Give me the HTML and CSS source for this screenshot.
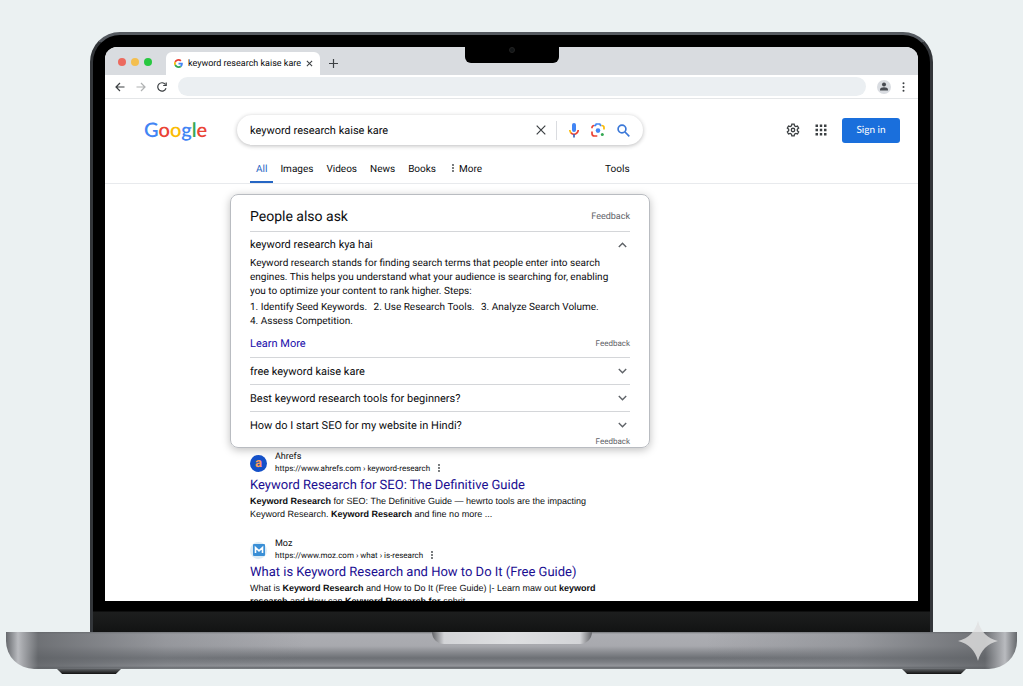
FILE: index.html
```html
<!DOCTYPE html>
<html lang="en">
<head>
	<meta charset="UTF-8">
	<title>keyword research kaise kare</title>
	<link rel="stylesheet" href="styles.css">
</head>
<body>
	<div class="laptop">
		<div class="lid">
			<div class="notch"><i class="camera"></i></div>
			<div class="screen">
				<!-- browser tabs -->
				<div class="tabstrip">
					<div class="lights"><i class="red"></i><i class="yellow"></i><i class="green"></i></div>
					<div class="tab">
						<svg class="favicon" viewBox="0 0 48 48">
							<path fill="#ea4335" d="M24 9.500c3.500 0 6.700 1.200 9.200 3.600l6.900-6.900C35.900 2.400 30.500 0 24 0 14.600 0 6.500 5.400 2.600 13.200l8 6.200C12.400 13.700 17.700 9.500 24 9.500z"/>
							<path fill="#4285f4" d="M47 24.500c0-1.600-.2-3.100-.4-4.500H24v9h12.900c-.6 3-2.200 5.500-4.700 7.200l7.700 6C44.400 38 47 31.800 47 24.500z"/>
							<path fill="#fbbc05" d="M10.500 28.600c-.5-1.500-.8-3-.8-4.600s.3-3.100.8-4.600l-8-6.200C.9 16.500 0 20.100 0 24s.9 7.500 2.600 10.800z"/>
							<path fill="#34a853" d="M24 48c6.500 0 11.900-2.100 15.900-5.800l-7.700-6c-2.200 1.500-4.900 2.300-8.200 2.300-6.300 0-11.600-4.200-13.500-9.900l-8 6.200C6.500 42.600 14.600 48 24 48z"/>
						</svg>
						<span>keyword research kaise kare</span>
						<button class="icon-btn" aria-label="Close tab"><svg width="7" height="7" viewBox="0 0 8 8"><path d="M1 1l6 6M7 1l-6 6"/></svg></button>
					</div>
					<button class="icon-btn new-tab" aria-label="New tab"><svg width="9" height="9" viewBox="0 0 9 9"><path d="M4.500 0v9M0 4.500h9"/></svg></button>
				</div>
				<div class="toolbar">
					<button class="icon-btn" aria-label="Back"><svg width="10" height="10" viewBox="0 0 10 10"><path d="M9.500 5H1M5 1L1 5l4 4"/></svg></button>
					<button class="icon-btn off" aria-label="Forward"><svg width="10" height="10" viewBox="0 0 10 10"><path d="M.5 5H9M5 1l4 4-4 4"/></svg></button>
					<button class="icon-btn" aria-label="Reload"><svg width="10" height="10" viewBox="0 0 10 10"><path d="M9 6.200A4.200 4.200 0 1 1 8.400 2.500M9.200.5v3H6.200"/></svg></button>
					<input class="address" type="text" aria-label="Address">
					<button class="icon-btn avatar" aria-label="Profile"><svg width="14" height="14" viewBox="0 0 14 14"><circle cx="7" cy="7" r="7" fill="#d9dce1"/><circle cx="7" cy="4.600" r="2" fill="#474a50"/><path d="M3 10.500V9.700C3 8 5 7.300 7 7.300s4 .7 4 2.400v.8z" fill="#474a50"/></svg></button>
					<button class="icon-btn dots" aria-label="Menu"><svg width="3" height="10" viewBox="0 0 3 10"><circle cx="1.500" cy="1.200" r="1"/><circle cx="1.500" cy="5" r="1"/><circle cx="1.500" cy="8.800" r="1"/></svg></button>
				</div>

				<!-- search header -->
				<div class="header">
					<a class="logo" href="#" aria-label="Google"><span class="b">G</span><span class="r">o</span><span class="y">o</span><span class="b">g</span><span class="g">l</span><span class="r">e</span></a>
					<form class="search">
						<input type="text" aria-label="Search" value="keyword research kaise kare">
						<button type="button" class="icon-btn clear" aria-label="Clear"><svg width="10" height="10" viewBox="0 0 10 10"><path d="M.7.7l8.600 8.600M9.300.7L.7 9.300"/></svg></button>
						<button type="button" class="icon-btn" aria-label="Voice search">
							<svg width="10" height="15" viewBox="0 0 10 15" class="thick">
								<rect x="3" y="0" width="4" height="9" rx="2" fill="#4285f4" stroke="none"/>
								<path d="M.8 7C.9 8.300 1.400 9.300 2.200 10" stroke="#fbbc05"/>
								<path d="M2 9.900c1.700 1.700 4.300 1.700 6 0 .8-.8 1.200-1.800 1.200-2.900" stroke="#ea4335"/>
								<path d="M5 11v3.500" stroke="#3f62b8"/>
							</svg>
						</button>
						<button type="button" class="icon-btn" aria-label="Search by image">
							<svg width="14" height="14" viewBox="0 0 14 14" class="thick">
								<path d="M1 5.200V4.500C1 3.200 2 2.500 3 2.500" stroke="#ea4335"/>
								<path d="M3 2.500h1.500L5.200 1h3.600l.7 1.500h1" stroke="#4285f4"/>
								<path d="M10.500 2.500c1.500 0 2.500.7 2.500 2v2" stroke="#fbbc05"/>
								<path d="M1 8.500v2C1 12 2 13 3.500 13h2.800" stroke="#ea4335"/>
								<circle cx="7" cy="7.600" r="2.300" fill="#4285f4" stroke="none"/>
								<circle cx="11.300" cy="11.500" r="1.500" fill="#34a853" stroke="none"/>
							</svg>
						</button>
						<button class="icon-btn" aria-label="Google Search"><svg width="13" height="13" viewBox="0 0 13 13" class="thick"><circle cx="5" cy="5" r="3.900" stroke="#3b78d8"/><path d="M8 8l4.300 4.300" stroke="#3b78d8"/></svg></button>
					</form>
					<div class="account">
						<button class="icon-btn" aria-label="Settings"><svg width="14" height="14" viewBox="0 0 24 24" class="gear"><path d="M10 2h4l.6 3 2.200 1.200 2.900-1 2 3.500-2.300 2v2.600l2.300 2-2 3.500-2.900-1-2.200 1.200-.6 3h-4l-.6-3-2.200-1.200-2.900 1-2-3.500 2.300-2v-2.600l-2.300-2 2-3.500 2.900 1L9.400 5z"/><circle cx="12" cy="12" r="3"/></svg></button>
						<button class="icon-btn dots" aria-label="Google apps"><svg width="12" height="12" viewBox="0 0 12 12"><path d="M.5.5h2.500V3H.5zM4.800.5h2.400V3H4.800zM9 .5h2.500V3H9zM.5 4.800h2.500v2.400H.5zM4.800 4.800h2.400v2.400H4.800zM9 4.800h2.500v2.400H9zM.5 9h2.500v2.500H.5zM4.800 9h2.400v2.500H4.800zM9 9h2.500v2.500H9z"/></svg></button>
						<button class="signin">Sign in</button>
					</div>
				</div>
				<div class="nav">
					<a class="active" href="#">All</a>
					<a href="#">Images</a>
					<a href="#">Videos</a>
					<a href="#">News</a>
					<a href="#">Books</a>
					<a class="more" href="#"><svg class="kebab" width="2" height="8" viewBox="0 0 2 8"><circle cx="1" cy="1" r=".9"/><circle cx="1" cy="4" r=".9"/><circle cx="1" cy="7" r=".9"/></svg>More</a>
					<a class="tools" href="#">Tools</a>
				</div>

				<!-- people also ask -->
				<div class="ask">
					<div class="ask-head">
						<h2>People also ask</h2>
						<a href="#">Feedback</a>
					</div>
					<div class="question open">
						<button>keyword research kya hai<svg width="9" height="6" viewBox="0 0 9 6"><path d="M.8 5l3.700-3.700L8.200 5"/></svg></button>
						<p>Keyword research stands for finding search terms that people enter into search engines. This helps you understand what your audience is searching for, enabling you to optimize your content to rank higher. Steps:</p>
						<p class="steps"><span>1. Identify Seed Keywords.</span> <span>2. Use Research Tools.</span> <span>3. Analyze Search Volume.</span> <span>4. Assess Competition.</span></p>
						<div class="ask-foot">
							<a class="learn" href="#">Learn More</a>
							<a class="feedback" href="#">Feedback</a>
						</div>
					</div>
					<div class="question"><button>free keyword kaise kare<svg width="9" height="6" viewBox="0 0 9 6"><path d="M.8 1l3.700 3.700L8.200 1"/></svg></button></div>
					<div class="question"><button>Best keyword research tools for beginners?<svg width="9" height="6" viewBox="0 0 9 6"><path d="M.8 1l3.700 3.700L8.200 1"/></svg></button></div>
					<div class="question"><button>How do I start SEO for my website in Hindi?<svg width="9" height="6" viewBox="0 0 9 6"><path d="M.8 1l3.700 3.700L8.200 1"/></svg></button></div>
					<a class="feedback last" href="#">Feedback</a>
				</div>

				<!-- results -->
				<div class="results">
					<div class="result">
						<div class="site">
							<span class="badge ahrefs">a</span>
							<div>
								<p>Ahrefs</p>
								<p class="url">https://www.ahrefs.com › keyword-research <svg class="kebab" width="2" height="8" viewBox="0 0 2 8"><circle cx="1" cy="1" r=".9"/><circle cx="1" cy="4" r=".9"/><circle cx="1" cy="7" r=".9"/></svg></p>
							</div>
						</div>
						<h3><a href="#">Keyword Research for SEO: The Definitive Guide</a></h3>
						<p class="snippet"><b>Keyword Research</b> for SEO: The Definitive Guide — hewrto tools are the impacting Keyword Research. <b>Keyword Research</b> and fine no more ...</p>
					</div>
					<div class="result">
						<div class="site">
							<span class="badge moz"><svg width="12" height="12" viewBox="0 0 12 12"><rect width="12" height="12" rx="1" fill="#3a8fd6"/><path d="M2.500 9V3.500L6 6.800l3.500-3.300V9" fill="none" stroke="#fff" stroke-width="1.600"/></svg></span>
							<div>
								<p>Moz</p>
								<p class="url">https://www.moz.com › what › is-research <svg class="kebab" width="2" height="8" viewBox="0 0 2 8"><circle cx="1" cy="1" r=".9"/><circle cx="1" cy="4" r=".9"/><circle cx="1" cy="7" r=".9"/></svg></p>
							</div>
						</div>
						<h3><a href="#">What is Keyword Research and How to Do It (Free Guide)</a></h3>
						<p class="snippet">What is <b>Keyword Research</b> and How to Do It (Free Guide) |- Learn maw out <b>keyword research</b> and How can <b>Keyword Research for</b> sphrit.</p>
					</div>
				</div>
			</div>
			<div class="chin"></div>
		</div>
		<div class="base">
			<div class="thumb"></div>
			<svg class="spark" width="40" height="40" viewBox="0 0 40 40"><path d="M20 0c3 11 9 17 20 20-11 3-17 9-20 20-3-11-9-17-20-20C11 17 17 11 20 0z"/></svg>
		</div>
		<div class="feet"><i></i><i></i></div>
	</div>
</body>
</html>
```
FILE: styles.css
```css
*{
	margin: 0;
	padding: 0;
	box-sizing: border-box;
}
body{
	background: #ebf1f2;
	font-family: Roboto, Arial, sans-serif;
	color: #0c0d0f;
	text-rendering: geometricPrecision;
}
a{
	color: inherit;
	text-decoration: none;
}
button{
	border: 0;
	background: none;
	font-family: inherit;
	color: inherit;
	text-rendering: inherit;
}
input{
	border: 0;
	outline: 0;
	font-family: inherit;
	text-rendering: inherit;
}

/* laptop */
.laptop{
	display: flex;
	flex-direction: column;
	height: 100vh;
	padding: 32px 6px 12px;
}
.lid{
	position: relative;
	flex: 1;
	min-height: 0;
	display: flex;
	flex-direction: column;
	margin: 0 84px;
	padding: 12px 12px 0;
	border: 3px solid #33363a;
	border-top-color: #555a60;
	border-bottom: 0;
	border-radius: 30px 30px 0 0;
	background: #000;
}
.screen{
	flex: 1;
	min-height: 0;
	overflow: hidden;
	border-radius: 12px 12px 0 0;
	background: #fff;
}
.notch{
	position: absolute;
	top: 10px;
	left: 50%;
	width: 94px;
	height: 18px;
	margin-left: -47px;
	border-radius: 0 0 6px 6px;
	background: #000;
}
.camera{
	display: block;
	width: 6px;
	height: 6px;
	margin: 2px auto;
	border-radius: 50%;
	background: #111416;
	border: 1px solid #222;
}
.chin{
	flex: none;
	height: 31px;
	margin: 0 -12px;
	background: linear-gradient(#000 10px, #1d1e1e 11px, #121313);
}
.base{
	position: relative;
	height: 37px;
	border-radius: 0 0 28px 28px;
	background:
		linear-gradient(90deg, #66696d 0, #b9bbbf 12px, #a4a6aa 17px, rgba(96,99,103,.8) 32px, rgba(120,123,128,.4) 160px, transparent 300px, transparent 700px, rgba(120,123,128,.4) 850px, rgba(96,99,103,.8) calc(100% - 32px), #a4a6aa calc(100% - 17px), #b9bbbf calc(100% - 12px), #66696d 100%),
		linear-gradient(#75777b 0, #acadb2 2px, #a8a9ae 14px, #8a8c91 20px, #6d7075 26px, #7c7f84 30px, #94969b 34px, #606468 36px, #8d9094 37px);
}
.thumb{
	width: 160px;
	height: 12px;
	margin: 0 auto;
	border-radius: 0 0 12px 12px;
	background: linear-gradient(90deg, #626367, #d3d4d7 12px, #dedfe1 50%, #d3d4d7 calc(100% - 12px), #626367);
}
.spark{
	position: absolute;
	right: 19px;
	top: -11px;
	fill: rgba(225,225,225,.8);
}
.feet{
	display: flex;
	justify-content: space-between;
	padding: 0 51px;
}
.feet i{
	width: 64px;
	height: 5px;
	background: linear-gradient(#5c5f62, #111);
	clip-path: polygon(0 0, 100% 0, 92% 100%, 8% 100%);
}

/* browser */
.icon-btn{
	display: flex;
	align-items: center;
	flex: none;
}
.icon-btn svg{
	fill: none;
	stroke: #3c4043;
	stroke-width: 1.2;
}
.icon-btn .thick{
	stroke-width: 1.7;
}
.icon-btn .gear{
	stroke-width: 2.2;
}
.dots svg{
	fill: #3c4043;
	stroke: none;
}
.avatar svg{
	stroke: none;
}
.off{
	opacity: .4;
}
.tabstrip{
	display: flex;
	align-items: flex-end;
	height: 28px;
	padding-left: 13px;
	background: #d9dce0;
}
.lights{
	display: flex;
	gap: 5px;
	width: 48px;
	padding-bottom: 9px;
}
.lights i{
	width: 8px;
	height: 8px;
	border-radius: 50%;
}
.red{
	background: #ec6a5e;
}
.yellow{
	background: #f4bf4f;
}
.green{
	background: #28c840;
}
.tab{
	display: flex;
	align-items: center;
	gap: 5px;
	height: 23px;
	padding: 0 7px 0 8px;
	border-radius: 6px 6px 0 0;
	background: #fff;
	font-size: 9px;
}
.favicon{
	width: 9px;
	height: 9px;
}
.new-tab{
	height: 23px;
	margin-left: 9px;
}
.toolbar{
	display: flex;
	align-items: center;
	gap: 11px;
	height: 24px;
	padding: 0 13px 0 10px;
	border-bottom: 1px solid #e4e6e8;
}
.address{
	flex: 1;
	min-width: 0;
	height: 19px;
	border-radius: 10px;
	background: #ebeff2;
}

/* search header */
.header{
	display: flex;
	align-items: center;
	padding: 16px 18px 0 39px;
}
.logo{
	flex: none;
	width: 93px;
	font-family: Lato, sans-serif;
	font-size: 20px;
	line-height: 24px;
	font-weight: 600;
}
.b{
	color: #4285f4;
}
.r{
	color: #ea4335;
}
.y{
	color: #fbbc05;
}
.g{
	color: #34a853;
}
.search{
	display: flex;
	align-items: center;
	gap: 12px;
	width: 406px;
	height: 30px;
	padding: 0 13px;
	border-radius: 16px;
	box-shadow: 0 1px 4px rgba(32,33,36,.3);
}
.search input{
	flex: 1;
	min-width: 0;
	font-size: 11px;
	color: #0c0d0f;
}
.clear{
	height: 19px;
	padding-right: 10px;
	border-right: 1px solid #dadce0;
}
.account{
	display: flex;
	align-items: center;
	gap: 15px;
	margin-left: auto;
}
.signin{
	width: 58px;
	height: 25px;
	margin-left: 0;
	border-radius: 3px;
	background: #1a6fdc;
	color: #fff;
	font-family: Lato, sans-serif;
	font-size: 10px;
}
.nav{
	display: flex;
	gap: 13px;
	height: 39px;
	padding: 19px 0 0 145px;
	border-bottom: 1px solid #e8eaed;
	font-size: 10px;
	line-height: 12px;
}
.active{
	margin-right: -6px;
	padding: 0 6px;
	border-bottom: 2px solid #2566c4;
	color: #2566c4;
}
.kebab{
	fill: #3c4043;
}
.more .kebab{
	margin: 0 5px 0 3px;
}
.tools{
	margin-left: 110px;
}

/* people also ask */
.ask{
	width: 420px;
	height: 254px;
	margin: 10px 0 0 125px;
	padding: 0 19px;
	border: 1px solid #b9bcc1;
	border-radius: 8px;
	box-shadow: 0 2px 8px rgba(0,0,0,.25);
	font-size: 11px;
	line-height: 14px;
}
.ask-head{
	display: flex;
	align-items: center;
	justify-content: space-between;
	height: 36px;
	padding-top: 8px;
}
.ask-head h2{
	font-size: 14px;
	font-weight: 400;
}
.ask-head a{
	font-size: 9px;
	color: #5f6368;
}
.question{
	border-top: 1px solid #d4d6d9;
}
.question button{
	display: flex;
	align-items: center;
	justify-content: space-between;
	width: 100%;
	height: 26px;
	padding-right: 3px;
	font-size: 11px;
}
.question button svg{
	fill: none;
	stroke: #5f6368;
	stroke-width: 1.4;
}
.open button{
	height: 25px;
}
.open p{
	padding-right: 8px;
	font-size: 10px;
}
.open .steps{
	margin-top: 2px;
}
.steps span{
	display: inline-block;
	margin-right: 4px;
}
.ask-foot{
	display: flex;
	align-items: center;
	justify-content: space-between;
	height: 28px;
	padding-top: 2px;
}
.learn{
	color: #1a0dab;
}
.feedback{
	font-size: 8px;
	color: #5f6368;
}
.last{
	display: block;
	text-align: right;
	line-height: 8px;
}

/* results */
.results{
	width: 500px;
	padding: 4px 0 0 145px;
}
.result{
	margin-bottom: 18px;
}
.site{
	display: flex;
	align-items: center;
	gap: 8px;
	font-size: 9px;
	line-height: 11px;
}
.url{
	font-size: 8px;
}
.badge{
	display: flex;
	align-items: center;
	justify-content: center;
	width: 17px;
	height: 17px;
	border-radius: 50%;
}
.ahrefs{
	background: #1450c8;
	color: #ff9c5a;
	font-size: 13px;
	font-weight: bold;
}
.moz{
	background: #dcebf5;
}
.site .kebab{
	margin-left: 6px;
	vertical-align: -1px;
}
.result h3{
	margin-top: 3px;
	font-size: 13px;
	line-height: 18px;
	font-weight: 400;
	color: #1a0d91;
}
.snippet{
	font-family: "Liberation Sans", Arial, sans-serif;
	font-size: 9px;
	line-height: 13px;
}
```
